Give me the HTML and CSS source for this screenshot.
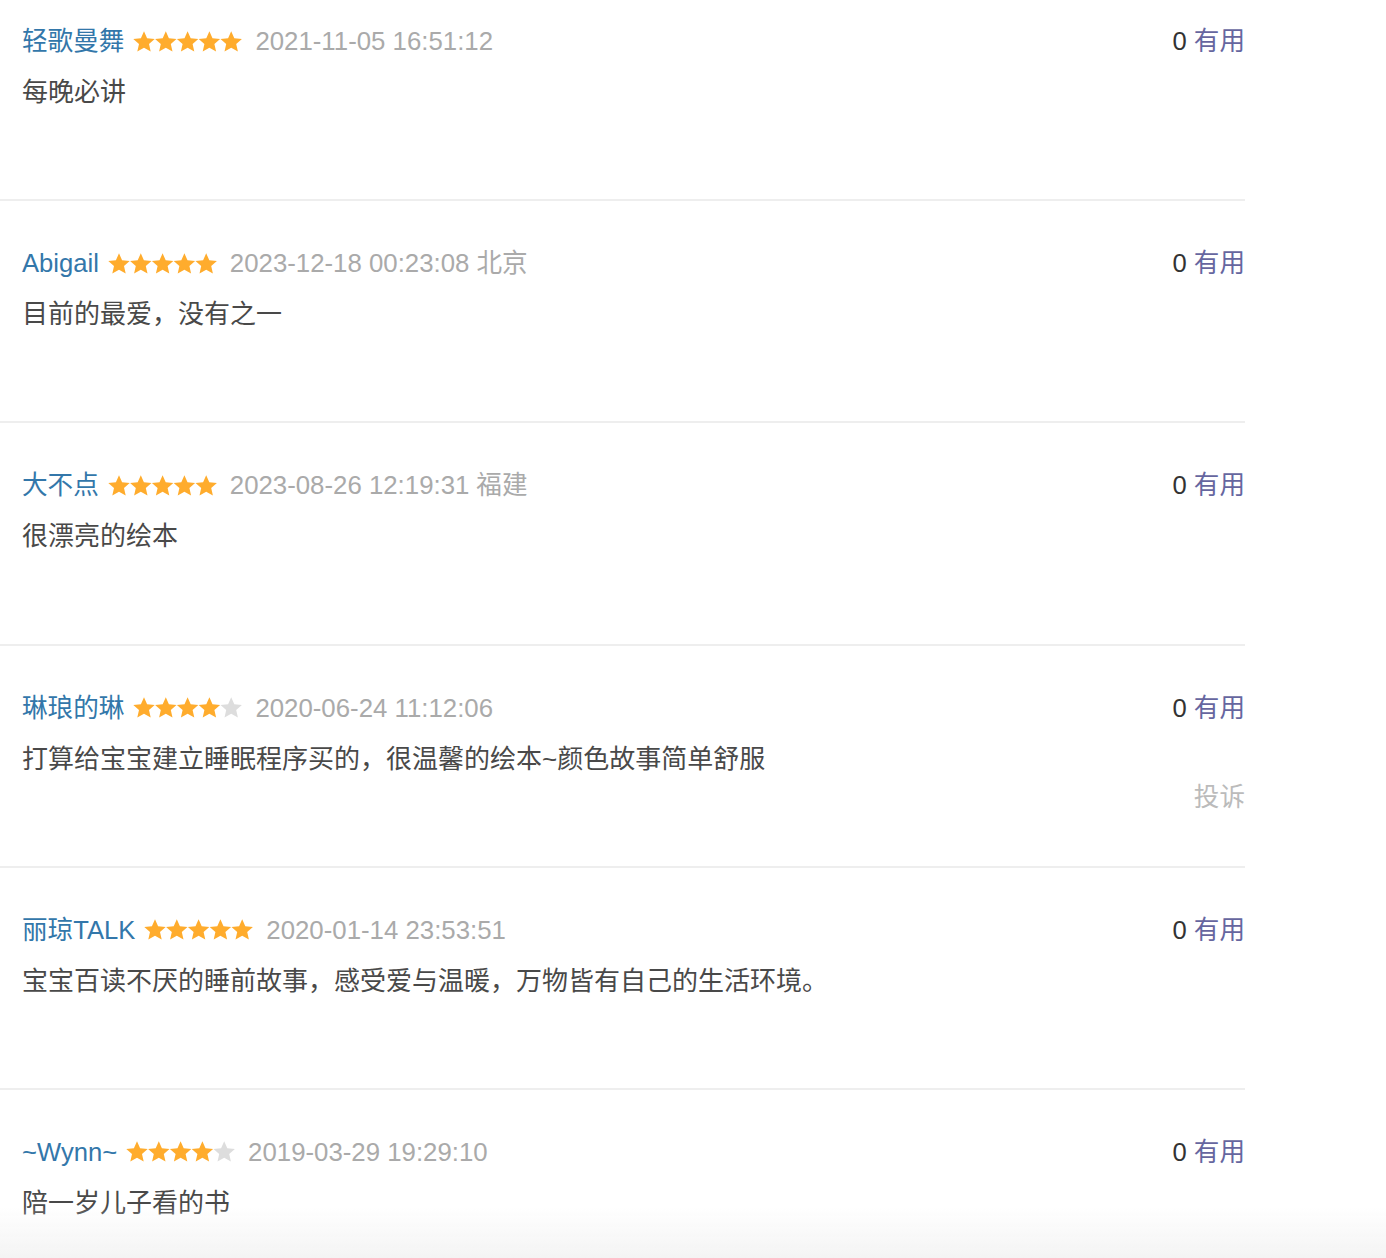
FILE: index.html
```html
<!DOCTYPE html>
<html lang="zh-CN">
<head>
<meta charset="utf-8">
<title>短评</title>
<link rel="stylesheet" href="styles.css">
</head>
<body>
<svg class="defs" width="0" height="0" aria-hidden="true">
  <defs>
    <path id="star" d="M11 0.3 L14.1 7.2 L21.7 7.9 L16 13 L17.7 20.6 L11 16.7 L4.3 20.6 L6 13 L0.3 7.9 L7.9 7.2 Z"/>
  </defs>
</svg>
<ul class="reviews">
  <li class="review">
    <div class="head">
      <div class="meta">
        <a class="name" href="#">轻歌曼舞</a>
        <svg class="stars" viewBox="0 0 110 21" width="110" height="21"><use href="#star" x="0" class="on"/><use href="#star" x="21.8" class="on"/><use href="#star" x="43.6" class="on"/><use href="#star" x="65.4" class="on"/><use href="#star" x="87.2" class="on"/></svg>
        <span class="time">2021-11-05 16:51:12</span>
      </div>
      <div class="vote"><span class="count">0</span> <a class="useful" href="#">有用</a></div>
    </div>
    <p class="content">每晚必讲</p>
  </li>
  <li class="review">
    <div class="head">
      <div class="meta">
        <a class="name" href="#">Abigail</a>
        <svg class="stars" viewBox="0 0 110 21" width="110" height="21"><use href="#star" x="0" class="on"/><use href="#star" x="21.8" class="on"/><use href="#star" x="43.6" class="on"/><use href="#star" x="65.4" class="on"/><use href="#star" x="87.2" class="on"/></svg>
        <span class="time">2023-12-18 00:23:08</span><span class="place">北京</span>
      </div>
      <div class="vote"><span class="count">0</span> <a class="useful" href="#">有用</a></div>
    </div>
    <p class="content">目前的最爱，没有之一</p>
  </li>
  <li class="review">
    <div class="head">
      <div class="meta">
        <a class="name" href="#">大不点</a>
        <svg class="stars" viewBox="0 0 110 21" width="110" height="21"><use href="#star" x="0" class="on"/><use href="#star" x="21.8" class="on"/><use href="#star" x="43.6" class="on"/><use href="#star" x="65.4" class="on"/><use href="#star" x="87.2" class="on"/></svg>
        <span class="time">2023-08-26 12:19:31</span><span class="place">福建</span>
      </div>
      <div class="vote"><span class="count">0</span> <a class="useful" href="#">有用</a></div>
    </div>
    <p class="content">很漂亮的绘本</p>
  </li>
  <li class="review">
    <div class="head">
      <div class="meta">
        <a class="name" href="#">琳琅的琳</a>
        <svg class="stars" viewBox="0 0 110 21" width="110" height="21"><use href="#star" x="0" class="on"/><use href="#star" x="21.8" class="on"/><use href="#star" x="43.6" class="on"/><use href="#star" x="65.4" class="on"/><use href="#star" x="87.2" class="off"/></svg>
        <span class="time">2020-06-24 11:12:06</span>
      </div>
      <div class="vote"><span class="count">0</span> <a class="useful" href="#">有用</a></div>
    </div>
    <p class="content">打算给宝宝建立睡眠程序买的，很温馨的绘本~颜色故事简单舒服</p>
    <div class="foot"><a class="report" href="#">投诉</a></div>
  </li>
  <li class="review">
    <div class="head">
      <div class="meta">
        <a class="name" href="#">丽琼TALK</a>
        <svg class="stars" viewBox="0 0 110 21" width="110" height="21"><use href="#star" x="0" class="on"/><use href="#star" x="21.8" class="on"/><use href="#star" x="43.6" class="on"/><use href="#star" x="65.4" class="on"/><use href="#star" x="87.2" class="on"/></svg>
        <span class="time">2020-01-14 23:53:51</span>
      </div>
      <div class="vote"><span class="count">0</span> <a class="useful" href="#">有用</a></div>
    </div>
    <p class="content">宝宝百读不厌的睡前故事，感受爱与温暖，万物皆有自己的生活环境。</p>
  </li>
  <li class="review">
    <div class="head">
      <div class="meta">
        <a class="name" href="#">~Wynn~</a>
        <svg class="stars" viewBox="0 0 110 21" width="110" height="21"><use href="#star" x="0" class="on"/><use href="#star" x="21.8" class="on"/><use href="#star" x="43.6" class="on"/><use href="#star" x="65.4" class="on"/><use href="#star" x="87.2" class="off"/></svg>
        <span class="time">2019-03-29 19:29:10</span>
      </div>
      <div class="vote"><span class="count">0</span> <a class="useful" href="#">有用</a></div>
    </div>
    <p class="content">陪一岁儿子看的书</p>
  </li>
</ul>
<div class="fade"></div>
</body>
</html>
```

FILE: styles.css
```css
html, body {
  margin: 0;
  padding: 0;
  background: #fff;
}

body {
  font-family: "Liberation Sans", "Noto Sans CJK SC", sans-serif;
  font-size: 25.6px;
  color: #494949;
  overflow: hidden;
}

.defs {
  position: absolute;
  width: 0;
  height: 0;
}

.reviews {
  list-style: none;
  margin: -21px 0 0 0;
  padding: 0;
  width: 1245px;
}

.review {
  box-sizing: content-box;
  height: 176.2px;
  padding: 44px 0 0 22px;
  border-bottom: 2px solid #eeeeee;
}

.head {
  display: flex;
  justify-content: space-between;
  align-items: center;
  height: 36px;
}

.meta {
  display: flex;
  align-items: center;
  white-space: nowrap;
}

.name {
  color: #3377aa;
  text-decoration: none;
  line-height: 36px;
}

.stars {
  display: block;
  margin-left: 9px;
  margin-right: 12px;
}

.stars .on {
  fill: #ffac2d;
}

.stars .off {
  fill: #dddddd;
}

.time {
  color: #aaaaaa;
  font-size: 25.8px;
  line-height: 36px;
}

.place {
  color: #aaaaaa;
  margin-left: 7px;
  line-height: 36px;
}

.vote {
  white-space: nowrap;
  line-height: 36px;
}

.count {
  color: #333333;
}

.useful {
  color: #66669f;
  text-decoration: none;
}

.content {
  margin: 15px 0 0 0;
  font-size: 26px;
  line-height: 36px;
  color: #494949;
}

.foot {
  display: flex;
  justify-content: flex-end;
  margin-top: 2px;
}

.report {
  color: #bbbbbb;
  text-decoration: none;
  line-height: 36px;
}

.fade {
  position: fixed;
  left: 0;
  right: 0;
  bottom: 0;
  height: 52px;
  background: linear-gradient(rgba(255, 255, 255, 0), #f4f4f4);
  pointer-events: none;
}
```
